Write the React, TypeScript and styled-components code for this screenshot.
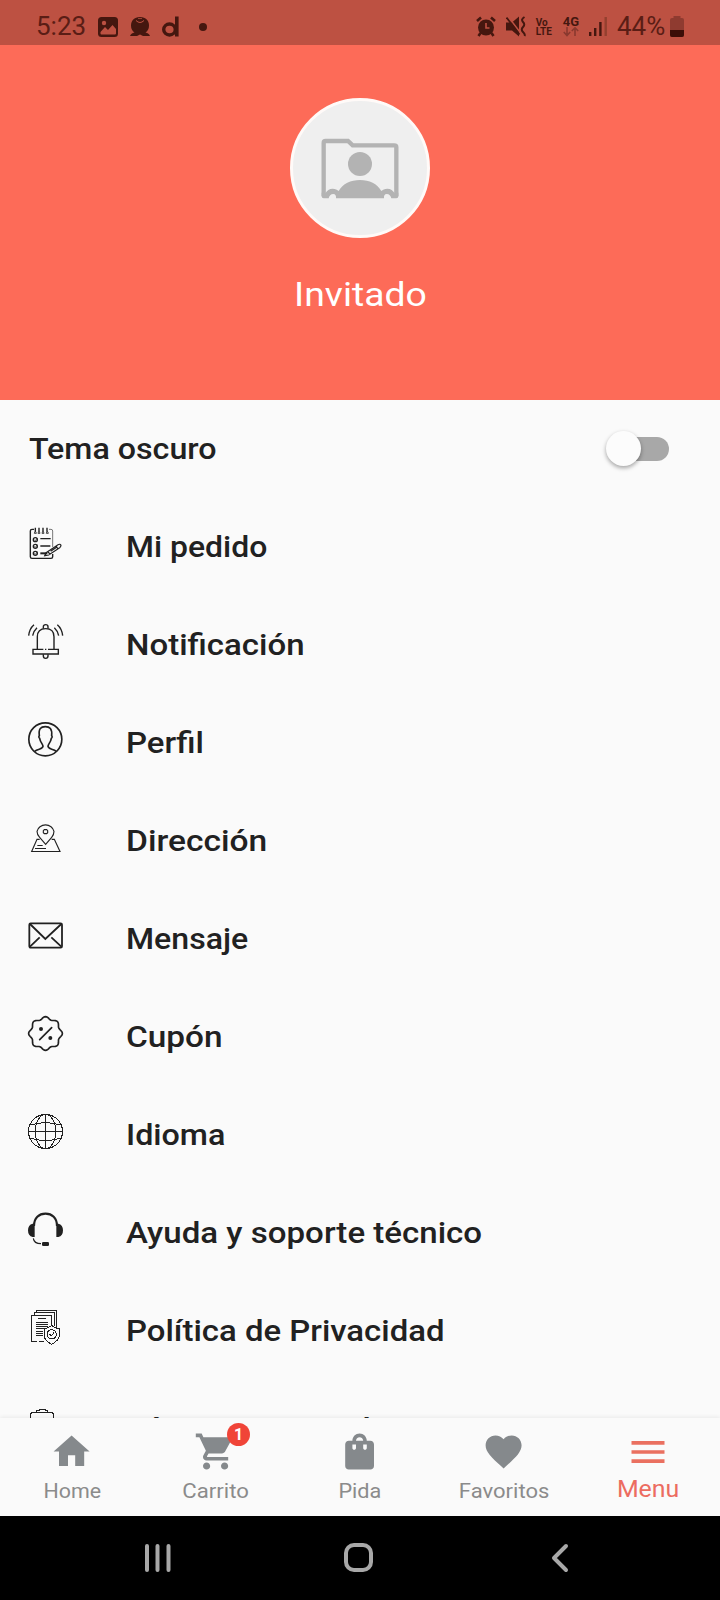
import React from 'react';
import styled, { createGlobalStyle } from 'styled-components';

const GlobalStyle = createGlobalStyle`
  *, *::before, *::after { box-sizing: border-box; }
  body { margin: 0; background: #fafafa; font-family: Roboto, "Noto Sans", sans-serif; }
`;

const Screen = styled.div`
  display: flex;
  flex-direction: column;
  width: 720px;
  height: 1600px;
  overflow: hidden;
  background: #fafafa;
`;

const StatusBar = styled.div`
  flex: none;
  display: flex;
  align-items: flex-start;
  justify-content: space-between;
  height: 45px;
  padding: 0 36px;
  background: #bd5142;
  color: #45170f;
`;

const StatusGroup = styled.div<{ $gap: number }>`
  display: flex;
  align-items: center;
  height: 53px;
  gap: ${(p) => p.$gap}px;
`;

const StatusText = styled.span<{ $width: number }>`
  width: ${(p) => p.$width}px;
  font-size: 25px;
  line-height: 30px;
  white-space: nowrap;
  transform: scaleX(1.04);
  transform-origin: left;
  color: #5a1d15;
`;

const StackedLabel = styled.span`
  display: flex;
  flex-direction: column;
  width: 17px;
  margin-top: 1px;
  font-size: 10px;
  line-height: 9.5px;
  font-weight: 700;
`;

const NetworkLabel = styled.span`
  display: flex;
  flex-direction: column;
  align-items: center;
  width: 17px;
  font-size: 13px;
  line-height: 11px;
  font-weight: 700;
`;

const MoreDot = styled.span`
  width: 8px;
  height: 8px;
  margin-left: 8px;
  border-radius: 50%;
  background: #45170f;
`;

const ProfileHeader = styled.header`
  flex: none;
  display: flex;
  flex-direction: column;
  align-items: center;
  height: 355px;
  padding-top: 52.5px;
  background: #fd6b58;
`;

const Avatar = styled.div`
  display: flex;
  width: 140px;
  height: 140px;
  border: 3px solid #fffaf8;
  border-radius: 50%;
  background: #efefef;
`;

const UserName = styled.h1`
  margin: 36.5px 0 0;
  font-size: 34px;
  font-weight: 400;
  line-height: 40px;
  transform: scaleX(1.098);
  color: #fff;
`;

const Menu = styled.main`
  flex: 1;
  min-height: 0;
  overflow: hidden;
  color: #212121;
`;

const ThemeRow = styled.div`
  display: flex;
  align-items: center;
  justify-content: space-between;
  height: 98px;
  padding: 0 51px 0 28.5px;
`;

const MenuRow = styled.div`
  display: flex;
  align-items: center;
  height: 98px;
  padding-left: 28px;
  gap: 62.5px;
`;

const RowIcon = styled.svg`
  flex: none;
  width: 35px;
  height: 35px;
  margin-bottom: 7px;
  overflow: visible;
  fill: none;
  stroke: #212121;
  stroke-width: 4.2;
`;

const RowTitle = styled.span<{ $stretch: number }>`
  font-size: 30px;
  font-weight: 500;
  line-height: 36px;
  white-space: nowrap;
  transform: scaleX(${(p) => p.$stretch});
  transform-origin: left;
`;

const Switch = styled.div`
  position: relative;
  width: 63px;
  height: 24px;
  display: flex;
  justify-content: flex-end;
`;

const SwitchTrack = styled.span`
  width: 48px;
  height: 24px;
  border-radius: 12px;
  background: #a8a8a8;
`;

const SwitchThumb = styled.span`
  position: absolute;
  left: 0;
  top: -6px;
  width: 35px;
  height: 35px;
  border-radius: 50%;
  background: #fcfcfc;
  box-shadow: 0 2px 4px rgba(0, 0, 0, 0.35);
`;

const TabBar = styled.nav`
  flex: none;
  position: relative;
  display: flex;
  height: 98px;
  background: #fafafa;
  box-shadow: 0 -1px 4px rgba(0, 0, 0, 0.07);
`;

const Tab = styled.div<{ $active?: boolean }>`
  position: relative;
  flex: 1;
  display: flex;
  flex-direction: column;
  align-items: center;
  padding-top: ${(p) => (p.$active ? 12 : 12.4)}px;
  color: ${(p) => (p.$active ? '#ea7060' : '#85898c')};
`;

const TabIcon = styled.svg<{ $size: number }>`
  width: ${(p) => p.$size}px;
  height: ${(p) => p.$size}px;
  fill: currentColor;
`;

const TabLabel = styled.span<{ $active?: boolean; $stretch: number }>`
  margin-top: ${(p) => (p.$active ? 1.5 : 4)}px;
  font-size: ${(p) => (p.$active ? 24 : 21)}px;
  line-height: 26px;
  transform: scaleX(${(p) => p.$stretch});
  color: ${(p) => (p.$active ? '#ec6c60' : '#8b8b8b')};
`;

const Badge = styled.span`
  position: absolute;
  top: 4.5px;
  left: 83px;
  width: 23px;
  height: 23px;
  border-radius: 50%;
  background: #f04438;
  color: #fff;
  font-size: 16px;
  font-weight: 700;
  line-height: 23px;
  text-align: center;
`;

const SystemBar = styled.footer`
  flex: none;
  display: flex;
  align-items: center;
  height: 84px;
  padding: 0 152px 1px 144px;
  justify-content: space-between;
  background: #000;
`;

const SystemIcon = styled.svg<{ $trailing?: number }>`
  margin-right: ${(p) => p.$trailing ?? 0}px;
  overflow: visible;
  fill: none;
  stroke: #a8a8a8;
  stroke-width: 4;
  stroke-linecap: round;
  stroke-linejoin: round;
`;

const scallop = Array.from({ length: 96 }, (_, i) => {
  const a = (i / 96) * Math.PI * 2;
  const r = 46.8 + 3.8 * Math.cos(8 * a);
  return `${(52.5 + r * Math.cos(a)).toFixed(1)},${(52.5 + r * Math.sin(a)).toFixed(1)}`;
}).join(' ');

const OrderIcon = () => (
  <>
    <path d="M18 10H12Q7 10 7 15V92Q7 97 12 97H69Q74 97 74 92V84" />
    <path d="M63 10H69Q74 10 74 15V63" strokeWidth="3" stroke="#777" />
    <path d="M22 5V17M33 5V17M45 5V17M57 5V17" />
    <path d="M19 22Q22 10 25 22ZM30 22Q33 10 36 22ZM42 22Q45 10 48 22ZM55 22Q58 10 61 22Z" strokeWidth="2.5" />
    <circle cx="22" cy="41" r="6" />
    <circle cx="22" cy="61" r="6" />
    <circle cx="22" cy="82" r="6" />
    <path d="M19 41L22 44L28 36M19 61L22 64L28 56M19 82L22 85L28 77" strokeWidth="2" />
    <path d="M37 38H68M37 60H67" />
    <path d="M37 82H58" strokeWidth="6" />
    <path d="M54 80L90 56Q97 53 99 58Q99 62 95 65L62 87L50 89ZM60 78L66 84M68 76L88 62M84 60L89 67" strokeWidth="3.5" />
  </>
);

const BellIcon = () => (
  <>
    <path d="M46 14V8Q46 2 53 2T60 8V14" />
    <path d="M28 75V38Q28 14 53 14T78 38V75" />
    <path d="M46 76H15V90H91V76H60M51 76H55" />
    <path d="M46 91V96Q46 103 53 103T60 96V91" />
    <path d="M2 35Q4 14 18 2M14 35Q17 20 27 11M104 35Q102 14 88 2M92 35Q89 20 79 11" />
  </>
);

const ProfileIcon = () => (
  <g strokeWidth="5">
    <circle cx="52" cy="52" r="49.5" />
    <path d="M20 88C29 80 45 82 45 73C45 66 37 62 35 49C32 47 32 43 34 41C31 20 39 14 52 14S73 20 71 41C73 43 73 47 70 49C68 62 60 66 60 73C60 82 76 80 85 88" />
  </g>
);

const AddressIcon = () => (
  <g strokeWidth="3.4">
    <path d="M53 73L35 52Q27 44 27 34A26 24 0 0 1 78 34Q78 44 71 52Z" />
    <path d="M49 29H56L59 32V38L56 41H49L46 38V32Z" />
    <path d="M35 58H27L11 94.500H96L79 58H71M28 76.500H44M21 85.500H54" />
  </g>
);

const MessageIcon = () => (
  <g strokeWidth="5.4">
    <rect x="4" y="16" width="98" height="73" rx="4" />
    <path d="M6 18L52 63L100 18M6 86L35 58M100 86L70 58" />
  </g>
);

const CouponIcon = () => (
  <>
    <polygon points={scallop} strokeWidth="5" />
    <path d="M35 71L71 35" strokeWidth="5" strokeLinecap="round" />
    <circle cx="39" cy="39" r="6" fill="#212121" stroke="none" />
    <circle cx="67" cy="66" r="6" fill="#212121" stroke="none" />
  </>
);

const LanguageIcon = () => (
  <g strokeWidth="3">
    <circle cx="52.500" cy="52.500" r="51" />
    <ellipse cx="52.500" cy="52.500" rx="31" ry="51" />
    <path d="M52.500 2V104M2 52.500H104M9 33Q52 19 96 33M9 73Q52 86 96 73" />
  </g>
);

const SupportIcon = () => (
  <>
    <path d="M18 42C18 18 33 5 52.500 5S87 18 87 42" strokeWidth="6.500" />
    <path d="M20 35V75H14Q0 72 0 55T14 35ZM85 35V75H91Q105 72 105 55T91 35Z" fill="#212121" stroke="none" />
    <path d="M16 79Q18 95 39 95" strokeWidth="3.500" />
    <rect x="42" y="90" width="21" height="12" rx="4" fill="#212121" stroke="none" />
  </>
);

const PolicyIcon = () => (
  <g strokeWidth="3">
    <path d="M18 14V8H79V48M25 7V2H86V51" />
    <path d="M49 95H32M27 95H10V16H71V46" />
    <path d="M30 25H53M24 36H59M24 42H59M24 49H59M24 55H50M24 65H45M24 71H45M24 77H45" />
    <path d="M71 46Q80 55 95 56V76Q93 91 71 103Q48 91 48 76V56Q62 55 71 46Z" fill="#fafafa" />
    <circle cx="71" cy="73" r="14" />
    <path d="M65 72L70 77L78 68" />
  </g>
);

const TermsIcon = () => (
  <g strokeWidth="3">
    <path d="M26 14V6H33V3H52V6H59V14Z" />
    <path d="M26 14H12L7 18V100H77V18L72 14H59M22 30H62M22 45H62M22 60H62" />
  </g>
);

const menuItems = [
  { title: 'Mi pedido', stretch: 1.064, Icon: OrderIcon, crisp: false },
  { title: 'Notificación', stretch: 1.1, Icon: BellIcon, crisp: false },
  { title: 'Perfil', stretch: 1.1, Icon: ProfileIcon, crisp: false },
  { title: 'Dirección', stretch: 1.118, Icon: AddressIcon, crisp: false },
  { title: 'Mensaje', stretch: 1.07, Icon: MessageIcon, crisp: false },
  { title: 'Cupón', stretch: 1.112, Icon: CouponIcon, crisp: false },
  { title: 'Idioma', stretch: 1.076, Icon: LanguageIcon, crisp: true },
  { title: 'Ayuda y soporte técnico', stretch: 1.102, Icon: SupportIcon, crisp: false },
  { title: 'Política de Privacidad', stretch: 1.097, Icon: PolicyIcon, crisp: true },
  { title: 'Términos y condiciones', stretch: 1.1, Icon: TermsIcon, crisp: true },
];

const tabs = [
  { label: 'Home', stretch: 1.02, path: 'M10 20v-6h4v6h5v-8h3L12 3 2 12h3v8z' },
  {
    label: 'Carrito',
    stretch: 1.055,
    badge: '1',
    path: 'M7 18c-1.1 0-1.99.9-1.99 2S5.9 22 7 22s2-.9 2-2-.9-2-2-2zM1 2v2h2l3.6 7.59-1.35 2.45c-.16.28-.25.61-.25.96 0 1.1.9 2 2 2h12v-2H7.42c-.14 0-.25-.11-.25-.25l.03-.12.9-1.63h7.45c.75 0 1.41-.41 1.75-1.03l3.58-6.49A1 1 0 0020 4H5.21l-.94-2H1zm16 16c-1.1 0-1.99.9-1.99 2s.89 2 1.99 2 2-.9 2-2-.9-2-2-2z',
  },
  {
    label: 'Pida',
    stretch: 1.03,
    path: 'M18 6h-2c0-2.21-1.79-4-4-4S8 3.79 8 6H6c-1.1 0-2 .9-2 2v12c0 1.1.9 2 2 2h12c1.1 0 2-.9 2-2V8c0-1.1-.9-2-2-2zm-8 4c0 .55-.45 1-1 1s-1-.45-1-1V8h2v2zm2-6c1.1 0 2 .9 2 2h-4c0-1.1.9-2 2-2zm4 6c0 .55-.45 1-1 1s-1-.45-1-1V8h2v2z',
  },
  {
    label: 'Favoritos',
    stretch: 1.05,
    path: 'M12 21.35l-1.45-1.32C5.4 15.36 2 12.28 2 8.5 2 5.42 4.42 3 7.5 3c1.74 0 3.41.81 4.5 2.09C13.09 3.81 14.76 3 16.5 3 19.58 3 22 5.42 22 8.5c0 3.78-3.4 6.86-8.55 11.54L12 21.35z',
  },
  { label: 'Menu', stretch: 1.036, active: true, path: 'M3 18h18v-2H3v2zm0-5h18v-2H3v2zm0-7v2h18V6H3z' },
];

export default function App() {
  return (
    <Screen>
      <GlobalStyle />
      <StatusBar>
        <StatusGroup $gap={11}>
          <StatusText $width={51}>5:23</StatusText>
          <svg width="20" height="20" viewBox="0 0 20 20">
            <rect width="20" height="20" rx="3.500" fill="#45170f" />
            <circle cx="6" cy="6" r="2.200" fill="#bd5142" />
            <path d="M2.500 15L7 10L10 13L14.500 8L18 12V16.500Q18 17.500 17 17.500H3.500Q2.500 17.500 2.500 16.500Z" fill="#bd5142" />
          </svg>
          <svg width="22" height="20" viewBox="0 0 22 20">
            <path d="M11 0C5 0 2 4 2 8.500Q2 13 5.500 15.500Q2 16 1 19H8L11 17.500L14 19H21Q20 16 16.500 15.500Q20 13 20 8.500C20 4 17 0 11 0Z" fill="#45170f" />
            <path d="M7 3.500Q11 7.500 15 3.500" fill="none" stroke="#bd5142" strokeWidth="1" />
            <path d="M9 1.500H13" stroke="#bd5142" strokeWidth="0.700" />
          </svg>
          <svg width="18" height="21" viewBox="0 0 18 21" fill="none" stroke="#45170f">
            <ellipse cx="7.500" cy="13.500" rx="5.800" ry="5.500" strokeWidth="3.400" />
            <path d="M14.800 0.500V20.500" strokeWidth="3.600" />
          </svg>
          <MoreDot />
        </StatusGroup>
        <StatusGroup $gap={9.7}>
          <svg width="20" height="21" viewBox="0 0 20 21">
            <circle cx="10" cy="11.500" r="8" fill="#45170f" />
            <path d="M1 5L5 1.500M19 5L15 1.500M4.500 17L2.500 20M15.500 17L17.500 20" stroke="#45170f" strokeWidth="2.600" />
            <path d="M10 7V12H13.500" fill="none" stroke="#bd5142" strokeWidth="1.600" />
          </svg>
          <svg width="20" height="21" viewBox="0 0 20 21">
            <path d="M0 6.500H6L13 0.500V20.500L6 14.500H0Z" fill="#45170f" />
            <path d="M2 0.500L15 17.500" stroke="#bd5142" strokeWidth="1.600" />
            <path d="M0.500 1.500L13.500 18.500" stroke="#45170f" strokeWidth="1.800" />
            <path d="M18.500 1Q14.500 3.500 17 6T17 11T17 16T18.500 20" fill="none" stroke="#45170f" strokeWidth="2" />
          </svg>
          <StackedLabel><span>Vo</span><span>LTE</span></StackedLabel>
          <NetworkLabel>
            4G
            <svg width="16" height="10" viewBox="0 0 16 10" fill="none" stroke="#8a392f" strokeWidth="1.600">
              <path d="M4 0V8M0.800 5L4 8.500L7.200 5M12 9V1M8.800 4L12 0.800L15.200 4" />
            </svg>
          </NetworkLabel>
          <svg width="18" height="21" viewBox="0 0 18 21" stroke="#45170f" strokeWidth="2.400">
            <path d="M1.200 16V20M6.200 12V20M11.400 6V20" />
            <path d="M16.700 1V20" stroke="#94402f" />
          </svg>
          <StatusText $width={43.500}>44%</StatusText>
          <svg width="14" height="21" viewBox="0 0 14 21">
            <path d="M3.500 0H10.500V2H12Q14 2 14 4V19Q14 21 12 21H2Q0 21 0 19V4Q0 2 2 2H3.500Z" fill="#8f3b30" />
            <path d="M0 14H14V19Q14 21 12 21H2Q0 21 0 19Z" fill="#3b0e08" />
          </svg>
        </StatusGroup>
      </StatusBar>

      <ProfileHeader>
        <Avatar>
          <svg width="134" height="134" viewBox="69 60 402 402">
            <path d="M161 346V186Q161 180 167 180H234L248 193H373Q379 193 379 199V346" fill="none" stroke="#b3b3b3" strokeWidth="13" />
            <circle cx="270" cy="249" r="36" fill="#b3b3b3" />
            <path
              d="M155 335L166 337C171 328 178 323 188 323C196 323 202 326 206 330C218 308 242 297 270 297S322 308 334 330C338 326 344 323 352 323C362 323 369 328 374 337L385 335V346Q385 352 379 352H364C362 344 358 339 350 339C344 339 341 344 342 352H198C199 344 196 339 190 339C182 339 178 344 176 352H161Q155 352 155 346Z"
              fill="#b3b3b3"
            />
          </svg>
        </Avatar>
        <UserName>Invitado</UserName>
      </ProfileHeader>

      <Menu>
        <ThemeRow>
          <RowTitle $stretch={1.073}>Tema oscuro</RowTitle>
          <Switch>
            <SwitchTrack />
            <SwitchThumb />
          </Switch>
        </ThemeRow>
        {menuItems.map(({ title, stretch, Icon, crisp }) => (
          <MenuRow key={title}>
            <RowIcon viewBox="0 0 105 105" shapeRendering={crisp ? 'crispEdges' : 'auto'}>
              <Icon />
            </RowIcon>
            <RowTitle $stretch={stretch}>{title}</RowTitle>
          </MenuRow>
        ))}
      </Menu>

      <TabBar>
        {tabs.map(({ label, stretch, path, badge, active }) => (
          <Tab key={label} $active={active}>
            <TabIcon $size={active ? 44 : 43.2} viewBox="0 0 24 24">
              <path d={path} />
            </TabIcon>
            {badge && <Badge>{badge}</Badge>}
            <TabLabel $active={active} $stretch={stretch}>{label}</TabLabel>
          </Tab>
        ))}
      </TabBar>

      <SystemBar>
        <SystemIcon width="27" height="28" viewBox="0 0 27 28">
          <path d="M3 2V26M13.500 2V26M24.500 2V26" />
        </SystemIcon>
        <SystemIcon width="29" height="29" viewBox="0 0 29 29" $trailing={6}>
          <rect x="2" y="2" width="25" height="25" rx="8" />
        </SystemIcon>
        <SystemIcon width="17" height="28" viewBox="0 0 17 28">
          <path d="M15 2L3 14L15 26" />
        </SystemIcon>
      </SystemBar>
    </Screen>
  );
}
